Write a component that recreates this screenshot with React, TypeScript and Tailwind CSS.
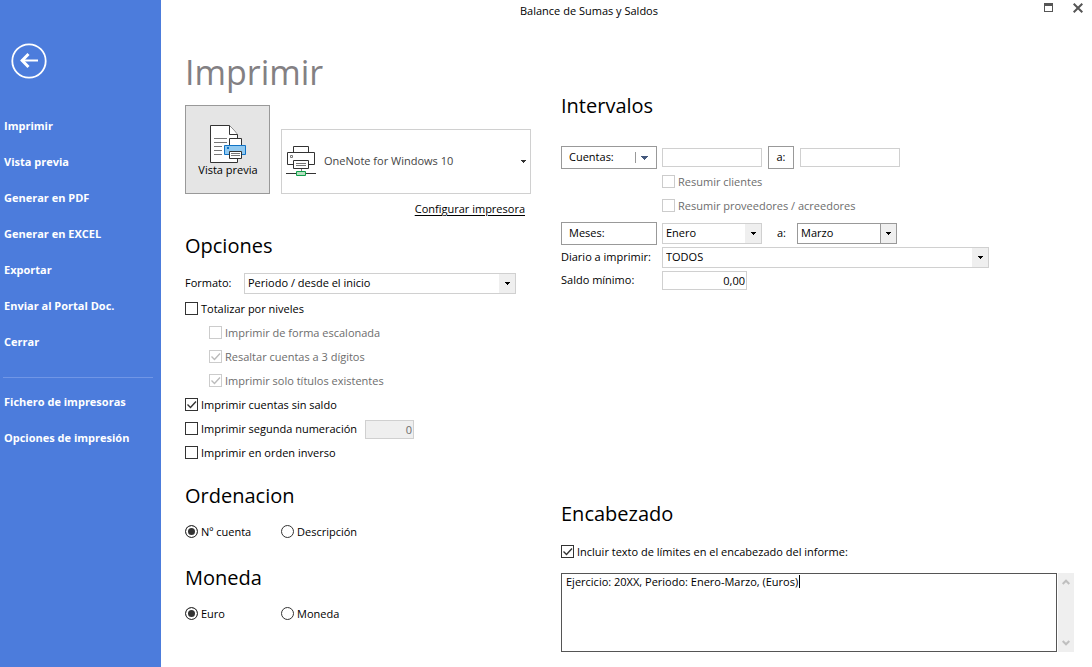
import { useState, type ReactNode } from 'react';
import { clsx } from 'clsx';

const MENU = ['Imprimir', 'Vista previa', 'Generar en PDF', 'Generar en EXCEL', 'Exportar', 'Enviar al Portal Doc.', 'Cerrar'];
const SETUP_MENU = ['Fichero de impresoras', 'Opciones de impresión'];
const MONTHS = ['Enero', 'Febrero', 'Marzo', 'Abril', 'Mayo', 'Junio', 'Julio', 'Agosto', 'Septiembre', 'Octubre', 'Noviembre', 'Diciembre'];

function CaretDown({ className }: { className?: string }) {
  return (
    <svg width="5" height="3" viewBox="0 0 5 3" shapeRendering="crispEdges" fill="currentColor" className={className} aria-hidden="true">
      <path d="M0 0h5v1H0zM1 1h3v1H1zM2 2h1v1H2z" />
    </svg>
  );
}

function BackIcon() {
  return (
    <svg width="36" height="36" viewBox="0 0 36 36" fill="none" stroke="white" aria-hidden="true">
      <circle cx="18" cy="18" r="16.7" strokeWidth="1.8" />
      <path d="M10.5 17.5H27" strokeWidth="2" />
      <path d="M17.5 11l-6.3 6.5 6.3 6.5" strokeWidth="3" />
    </svg>
  );
}

function PreviewIcon() {
  return (
    <svg width="36" height="38" viewBox="0 0 36 38" fill="white" stroke="#333" aria-hidden="true">
      <path d="M.5 .5h19l8 9v28H.5z" />
      <path d="M19.5 .5v9h8" />
      <path d="M4 13.5h13M4 17.5h13M4 21.5h8M4 25.5h8M4 29.5h8" stroke="#777" />
      <path d="M19.5 13.5h12v8h-12z" />
      <path d="M14.5 20.5h21v9h-21z" fill="#91c9f0" stroke="#1173c5" />
      <path d="M17 22h2v2h-2z" fill="#1173c5" stroke="none" />
      <path d="M19.5 26.5h12v7h-12z" />
      <path d="M21 28.5h9M21 30.5h9" stroke="#777" />
    </svg>
  );
}

function PrinterIcon() {
  return (
    <svg width="30" height="31" viewBox="0 0 30 31" fill="white" stroke="#333" aria-hidden="true">
      <path d="M7.5 .5h15v6h-15z" />
      <path d="M1.5 6.5h27v12h-27z" />
      <path d="M4.5 9.5h2v2h-2z" stroke="#777" />
      <path d="M7.5 14.5h15v8h-15z" />
      <path d="M10 17.5h10M10 19.5h10" stroke="#777" />
      <path d="M15.5 23v2" stroke="#777" />
      <path d="M0 27.5h30" />
      <path d="M10.5 25.5h9v4h-9z" fill="#b5dfc0" stroke="#10a04a" />
    </svg>
  );
}

interface CheckProps {
  label: string;
  defaultChecked?: boolean;
  disabled?: boolean;
}

function Check({ label, defaultChecked, disabled }: CheckProps) {
  return (
    <label className={clsx('flex h-6 items-center gap-[3px]', disabled && 'text-[#6d6d6d]')}>
      <span className="mb-px grid size-[13px] shrink-0">
        <input
          type="checkbox"
          defaultChecked={defaultChecked}
          disabled={disabled}
          className="peer col-start-1 row-start-1 size-[13px] appearance-none border border-[#333] bg-white disabled:border-[#ccc]"
        />
        <svg
          viewBox="0 0 13 13"
          fill="none"
          stroke="currentColor"
          strokeWidth="1.4"
          className="pointer-events-none invisible col-start-1 row-start-1 size-[13px] text-[#333] peer-checked:visible peer-disabled:text-[#bbb]"
          aria-hidden="true"
        >
          <path d="M2.5 6.5l3 3 5.5-6" />
        </svg>
      </span>
      <span>{label}</span>
    </label>
  );
}

function Radio({ name, label, defaultChecked }: { name: string; label: string; defaultChecked?: boolean }) {
  return (
    <label className="flex h-6 w-24 items-center gap-[3px]">
      <input
        type="radio"
        name={name}
        defaultChecked={defaultChecked}
        className="mb-px size-[13px] shrink-0 appearance-none rounded-full border border-[#333] bg-white checked:bg-[#333] checked:shadow-[inset_0_0_0_2px_white]"
      />
      <span>{label}</span>
    </label>
  );
}

interface SelectProps {
  id: string;
  options: string[];
  defaultValue?: string;
  className: string;
  active?: boolean;
  ariaLabel?: string;
}

function Select({ id, options, defaultValue, className, active, ariaLabel }: SelectProps) {
  return (
    <div className={clsx('relative h-[21px]', className)}>
      <select
        id={id}
        defaultValue={defaultValue}
        aria-label={ariaLabel}
        className={clsx('h-full w-full appearance-none border bg-white pr-5 pl-[3px] outline-none', active ? 'border-[#999]' : 'border-[#d0d0d0]')}
      >
        {options.map((o) => (
          <option key={o}>{o}</option>
        ))}
      </select>
      <span
        className={clsx(
          'pointer-events-none absolute inset-y-px right-px flex w-4 items-center justify-center bg-[#efefef]',
          active && 'border-l border-[#999]',
        )}
      >
        <CaretDown />
      </span>
    </div>
  );
}

function Heading({ children }: { children: ReactNode }) {
  return <h2 className="text-[20px] leading-7 text-black">{children}</h2>;
}

function Sidebar() {
  return (
    <aside className="w-[161px] shrink-0 bg-[#4c7cdc] pt-[43px] text-[11px] font-bold text-white">
      <button aria-label="Volver" className="ml-[11px] block">
        <BackIcon />
      </button>
      <nav className="mt-[29px] flex flex-col items-start">
        {MENU.map((item) => (
          <button key={item} className="h-9 pl-1 text-left">
            {item}
          </button>
        ))}
        <hr className="mt-[17px] mb-[6px] ml-[3px] w-[150px] border-[#7096e6]" />
        {SETUP_MENU.map((item) => (
          <button key={item} className="h-9 pl-1 text-left">
            {item}
          </button>
        ))}
      </nav>
    </aside>
  );
}

function TitleBar() {
  return (
    <header className="flex h-[22px] items-center">
      <h1 className="flex-1 text-center">Balance de Sumas y Saldos</h1>
      <div className="flex w-[75px] justify-end gap-5 pr-[9px] pb-[7px]">
        <button aria-label="Maximizar">
          <svg width="9" height="9" viewBox="0 0 9 9" fill="none" stroke="#555" shapeRendering="crispEdges" aria-hidden="true">
            <path d="M.5 .5h8v8h-8z" />
            <path d="M0 1.5h9" strokeWidth="2" />
          </svg>
        </button>
        <button aria-label="Cerrar ventana">
          <svg width="10" height="10" viewBox="0 0 10 10" stroke="#555" strokeWidth="2" aria-hidden="true">
            <path d="M.7 .7l8.6 8.6M9.3 .7L.7 9.3" />
          </svg>
        </button>
      </div>
    </header>
  );
}

function PrintColumn() {
  return (
    <section className="w-[346px] shrink-0">
      <h2 className="mt-[26px] text-[34px] leading-[48px] text-[#838083]">Imprimir</h2>
      <div className="mt-[9px] flex items-end gap-[11px]">
        <button className="flex h-[89px] w-[85px] flex-col items-center border border-[#999] bg-[#e5e5e5] pt-[19px] pl-px">
          <PreviewIcon />
          <span className="leading-[14px]">Vista previa</span>
        </button>
        <div className="relative h-[65px] flex-1">
          <select aria-label="Impresora" className="h-full w-full appearance-none border border-[#d0d0d0] bg-white pr-5 pl-[42px] text-[#444] outline-none">
            <option>OneNote for Windows 10</option>
          </select>
          <span className="pointer-events-none absolute inset-y-0 left-[5px] flex items-center">
            <PrinterIcon />
          </span>
          <span className="pointer-events-none absolute inset-y-0 right-[5px] flex items-center text-[#333]">
            <CaretDown />
          </span>
        </div>
      </div>
      <div className="mt-[7px] flex justify-end pr-[6px]">
        <a href="#configurar" className="leading-4 underline underline-offset-2">
          Configurar impresora
        </a>
      </div>

      <div className="mt-[15px]">
        <Heading>Opciones</Heading>
      </div>
      <div className="mt-[13px] mb-[3px] flex items-center">
        <label htmlFor="formato" className="w-[59px]">
          Formato:
        </label>
        <Select id="formato" className="w-[272px]" options={['Periodo / desde el inicio', 'Periodo', 'Desde el inicio']} />
      </div>
      <Check label="Totalizar por niveles" />
      <div className="pl-6">
        <Check label="Imprimir de forma escalonada" disabled />
        <Check label="Resaltar cuentas a 3 dígitos" disabled defaultChecked />
        <Check label="Imprimir solo títulos existentes" disabled defaultChecked />
      </div>
      <Check label="Imprimir cuentas sin saldo" defaultChecked />
      <div className="flex items-center">
        <div className="w-[180px]">
          <Check label="Imprimir segunda numeración" />
        </div>
        <input
          aria-label="Segunda numeración"
          defaultValue="0"
          disabled
          className="h-[19px] w-[49px] border border-[#d0d0d0] bg-[#efefef] pr-px text-right text-[#6d6d6d]"
        />
      </div>
      <Check label="Imprimir en orden inverso" />

      <div className="mt-[17px] mb-[10px]">
        <Heading>Ordenacion</Heading>
      </div>
      <div className="flex">
        <Radio name="orden" label="Nº cuenta" defaultChecked />
        <Radio name="orden" label="Descripción" />
      </div>
      <div className="mt-5 mb-[10px]">
        <Heading>Moneda</Heading>
      </div>
      <div className="flex">
        <Radio name="moneda" label="Euro" defaultChecked />
        <Radio name="moneda" label="Moneda" />
      </div>
    </section>
  );
}

function RangeColumn() {
  const [header, setHeader] = useState('Ejercicio: 20XX, Periodo: Enero-Marzo, (Euros)');

  return (
    <section className="min-w-0 flex-1">
      <div className="mt-[70px]">
        <Heading>Intervalos</Heading>
      </div>
      <div className="mt-[26px] flex items-center">
        <button className="flex h-[23px] w-24 items-center border border-[#999] pl-[7px]">
          <span className="flex-1 text-left">Cuentas:</span>
          <span className="flex h-[11px] items-center border-l border-[#999] pr-2 pl-[5px] text-[#44597d]">
            <svg width="7" height="4" viewBox="0 0 7 4" fill="currentColor" shapeRendering="crispEdges" aria-hidden="true">
              <path d="M0 0h7v1H0zM1 1h5v1H1zM2 2h3v1H2zM3 3h1v1H3z" />
            </svg>
          </span>
        </button>
        <input aria-label="Cuenta desde" className="ml-[5px] h-[19px] w-[100px] border border-[#d0d0d0] px-1 outline-none" />
        <button className="mx-[6px] h-[23px] w-[26px] border border-[#999]">a:</button>
        <input aria-label="Cuenta hasta" className="h-[19px] w-[100px] border border-[#d0d0d0] px-1 outline-none" />
      </div>
      <div className="mt-px mb-1 pl-[101px]">
        <Check label="Resumir clientes" disabled />
        <Check label="Resumir proveedores / acreedores" disabled />
      </div>
      <div className="flex items-center">
        <button className="h-[23px] w-24 border border-[#999] pl-[7px] text-left">Meses:</button>
        <Select id="mes-desde" ariaLabel="Mes desde" className="ml-[5px] w-[100px]" options={MONTHS} defaultValue="Enero" />
        <label htmlFor="mes-hasta" className="w-[35px] pl-[15px]">
          a:
        </label>
        <Select id="mes-hasta" className="w-[100px]" options={MONTHS} defaultValue="Marzo" active />
      </div>
      <div className="mt-[2px] flex items-center">
        <label htmlFor="diario" className="w-[101px] shrink-0">
          Diario a imprimir:
        </label>
        <Select id="diario" className="w-full max-w-[327px]" options={['TODOS']} />
      </div>
      <div className="mt-[3px] flex items-center">
        <label htmlFor="saldo" className="w-[101px]">
          Saldo mínimo:
        </label>
        <input id="saldo" defaultValue="0,00" className="h-[19px] w-[85px] border border-[#d0d0d0] pr-px text-right outline-none" />
      </div>

      <div className="mt-[210px] mb-[12px]">
        <Heading>Encabezado</Heading>
      </div>
      <Check label="Incluir texto de límites en el encabezado del informe:" defaultChecked />
      <div className="mt-[9px] flex h-[79px] gap-px">
        <div className="relative flex-1">
          <textarea
            aria-label="Texto del encabezado"
            value={header}
            onChange={(e) => setHeader(e.target.value)}
            className="block h-full w-full resize-none border border-[#555] px-1 leading-4 caret-transparent outline-none"
          />
          <span className="pointer-events-none absolute top-[2px] left-[238px] h-[13px] w-px bg-black" />
        </div>
        <div className="flex w-4 flex-col items-center justify-between bg-[#efefef] py-[6px]">
          <svg width="8" height="6" viewBox="0 0 8 6" fill="none" stroke="#bfbfbf" strokeWidth="2" aria-hidden="true">
            <path d="M.7 5L4 1.7 7.3 5" />
          </svg>
          <svg width="8" height="6" viewBox="0 0 8 6" fill="none" stroke="#bfbfbf" strokeWidth="2" aria-hidden="true">
            <path d="M.7 1L4 4.3 7.3 1" />
          </svg>
        </div>
      </div>
    </section>
  );
}

export default function App() {
  return (
    <div className="flex min-h-screen bg-white font-['Open_Sans','Noto_Sans',sans-serif] text-[11px] text-black">
      <Sidebar />
      <main className="min-w-0 flex-1">
        <TitleBar />
        <div className="flex gap-[30px] pr-[18px] pl-6">
          <PrintColumn />
          <RangeColumn />
        </div>
      </main>
    </div>
  );
}
